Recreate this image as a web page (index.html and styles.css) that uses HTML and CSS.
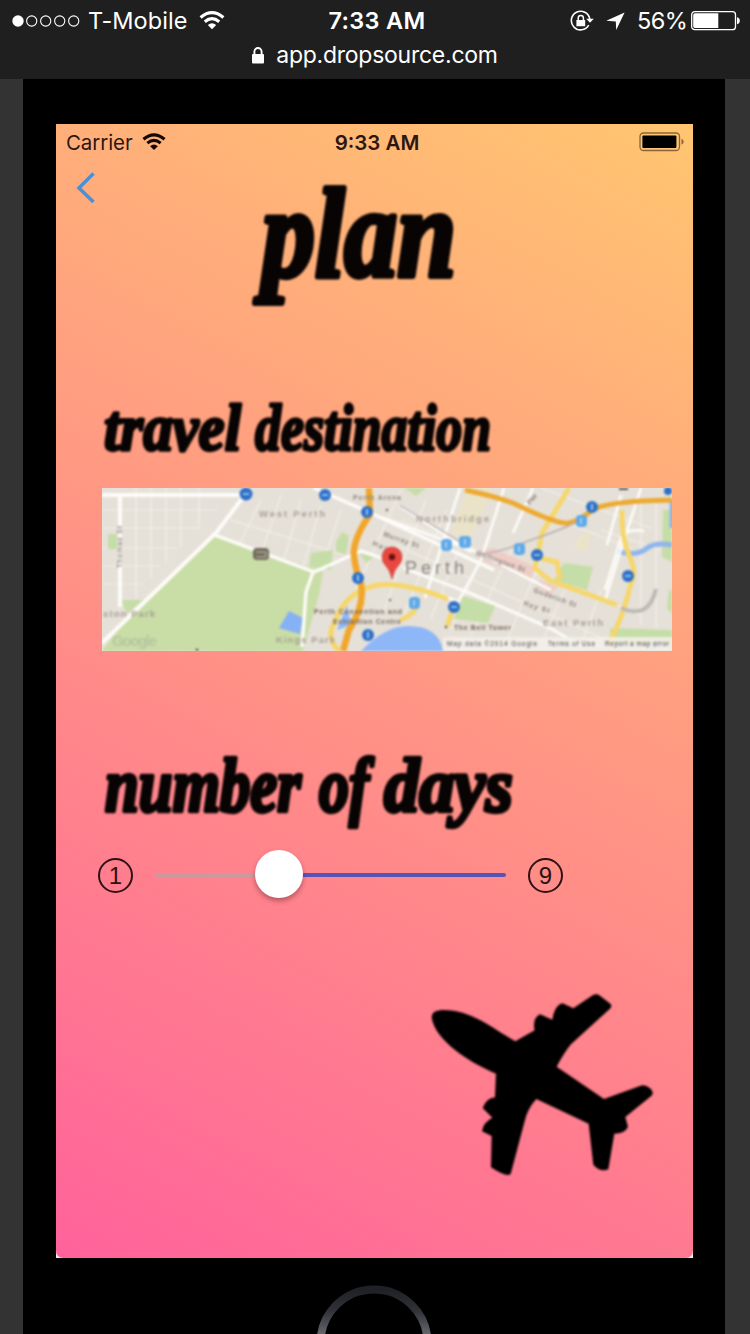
FILE: index.html
```html
<!DOCTYPE html>
<html lang="en">
<head>
<meta charset="utf-8">
<title>Plan</title>
<link rel="stylesheet" href="styles.css">
</head>
<body>
<header class="browser">
  <div class="status">
    <div class="status-left">
      <svg class="signal" width="70" height="14" viewBox="0 0 70 14"><circle cx="7" cy="7" r="5.7" fill="#fff"/><g fill="none" stroke="#fff" stroke-width="1.1"><circle cx="20.7" cy="7" r="5.1"/><circle cx="34.7" cy="7" r="5.1"/><circle cx="48.7" cy="7" r="5.1"/><circle cx="62.7" cy="7" r="5.1"/></g></svg>
      <span class="carrier">T-Mobile</span>
      <svg class="wifi" width="26" height="19" viewBox="0 0 26 19" fill="none" stroke="currentColor" stroke-width="3.1"><path d="M1.6 6.5Q13-3.2 24.4 6.5M5.8 10.7q7.2-6 14.4 0"/><path d="M13 18.3 8.8 14q4.2-3.5 8.4 0z" fill="currentColor" stroke="none"/></svg>
    </div>
    <div class="clock">7:33 AM</div>
    <div class="status-right">
      <svg width="24" height="22" viewBox="0 0 24 22"><path d="M18.7 15.2A9.3 9.3 0 1 1 19.8 9" fill="none" stroke="#fff" stroke-width="1.6"/><path d="M16.2 8.8h7.6L20 12.8zM6.4 10h8.8v6.2H6.4z" fill="#fff"/><path d="M8.2 10.5V8a2.6 2.6 0 0 1 5.2 0v2.5" fill="none" stroke="#fff" stroke-width="1.5"/></svg>
      <svg class="locate" width="19" height="18" viewBox="0 0 19 18"><path d="M18.6.4 10.2 18 9.8 9.6.3 8.8z" fill="#fff"/></svg>
      <span class="percent">56%</span>
      <svg width="50" height="20" viewBox="0 0 50 20"><rect x=".7" y=".7" width="43.8" height="18" rx="3" fill="none" stroke="#fff" stroke-width="1.3"/><path d="M4 2.3h23.3v14.8H4a1.8 1.8 0 0 1-1.8-1.8V4.1A1.8 1.8 0 0 1 4 2.3z" fill="#fff"/><path d="M46 6.3q2.8.8 2.8 3.5T46 13.2z" fill="#fff"/></svg>
    </div>
  </div>
  <div class="address">
    <svg width="12" height="17" viewBox="0 0 12 17"><rect y="7" width="12" height="9.5" rx="1" fill="#fff"/><path d="M2.4 8V4.6a3.6 3.6 0 0 1 7.2 0V8" fill="none" stroke="#fff" stroke-width="1.9"/></svg>
    <span class="url">app.dropsource.com</span>
  </div>
</header>

<main class="device">
  <section class="screen">
    <div class="app">
      <div class="app-status">
        <div class="app-carrier"><span>Carrier</span>
          <svg width="24" height="18" viewBox="0 0 26 19" fill="none" stroke="currentColor" stroke-width="3.4"><path d="M1.6 6.5Q13-3.2 24.4 6.5M5.8 10.7q7.2-6 14.4 0"/><path d="M13 18.3 8.8 14q4.2-3.5 8.4 0z" fill="currentColor" stroke="none"/></svg>
        </div>
        <div class="app-clock">9:33 AM</div>
        <svg class="app-battery" width="46" height="20" viewBox="0 0 46 20"><rect x="1" y="1" width="39.5" height="17.5" rx="3.5" fill="none" stroke="#8b643c" stroke-width="1.3"/><rect x="3.4" y="3.4" width="34" height="12.6" rx="1" fill="#000"/><path d="M42.5 6.7q2.2.8 2.2 3t-2.2 3z" fill="#8b643c"/></svg>
      </div>
      <svg class="back" width="20" height="34" viewBox="0 0 20 34"><path d="M17.5 2.5 3 17l14.5 14" fill="none" stroke="#4b90d4" stroke-width="3.6"/></svg>
      <h1 class="title"><svg class="script" width="225" height="130" viewBox="242 180 225 130"><text x="262" y="276" font-size="126" textLength="194" lengthAdjust="spacingAndGlyphs" stroke-width="6">plan</text></svg></h1>

      <h2 class="label-destination"><svg class="script" width="410" height="70" viewBox="96 394 410 70"><g font-size="66" stroke-width="3.4"><text x="104" y="450" textLength="137" lengthAdjust="spacingAndGlyphs">travel</text> <text x="255" y="450" textLength="236" lengthAdjust="spacingAndGlyphs">destination</text></g></svg></h2>

      <svg class="map" width="570" height="163" viewBox="101 488 570 163">
        <rect x="101" y="488" width="570" height="163" fill="#e6e1d8"/>
        <g class="map-art">
          <g stroke="#f2efe9" stroke-width="1.2" fill="none">
            <path d="M135 488v110M150 488v90M165 488v75M180 488v60M198 488v42M101 510h115M101 528h96M101 548h75M101 566h58M101 584h40M260 500l-22 45M280 495l-22 65M300 500l-20 70M320 505l-18 62M340 510l-20 60M230 520l110 34"/>
            <path d="M400 490l-45 100M425 500l-42 110M445 510l-42 105M470 520l-40 98M490 535l-40 95M510 550l-40 85M540 560l-34 80M570 575l-30 70M600 590l-20 55M400 520l240 95M395 545l210 95M400 565l180 78M480 490l150 58M540 488l110 40M600 530l60 20M640 500v125M655 500v130"/>
          </g>
          <path d="M211 536 322 572 318 595 302 651H101l15-20z" fill="#c9dda6"/>
          <path d="M107 534h9v15h-9zM120 600h22l-16 14zM335 542l6-10 7 4-3 18-10-2zM310 553l22-3-2 20-22-3zM358 553l15 4-8 6zM563 563l29 4-6 23-33-10zM462 596l32 10-7 17-34-4zM662 510h9v52l-10-5zM609 628l62 2v14h-62zM403 488h22l-10 8zM668 590h3v24l-5-6z" fill="#c5dda6"/>
          <path d="M477 550l15-2 42 19-3 12-52-19zM539 580l18 7-8 8-14-9z" fill="#edcdc6"/>
          <path d="M492 488l-22 48-20-3 17-45zM580 535l9-3-3 20-14-5z" fill="#ebe3c7"/>
          <path d="M288 611l14 7-3 16-21-6z" fill="#86b1f5"/>
          <path d="M360 651q24-25 47-25 31 0 35 25zM346 605l-10 25 14-5z" fill="#8eb7f7"/>
          <path d="M616 551q18 6 29-2 8-7 26-4M671 500v28M657 640l-5 9" fill="none" stroke="#8fb5ee" stroke-width="5"/>
          <g fill="none" stroke="#fdfcf9">
            <path d="M101 495H244M119 495v112M101 643 215 533 246 492" stroke-width="4"/>
            <path d="M211 534 313 572 360 551 398 564M312 572l-7 20-4 55M315 488l-2 0 50 22 130 60" stroke-width="3.4"/>
            <path d="M380 517 475 552 550 590M397 505 470 552M402 568l65 24 80 35 35 20M503 488l-23 72-23 42-18-8M459 488l-35 110M640 488l-18 55-18 58M532 488l-20 45M604 590l16-52q6-10 23-7M620 495l-14 50" stroke-width="2.6"/>
          </g>
          <g fill="none" stroke="#f6d66b" stroke-width="5">
            <path d="M338 651q-14-13-4-30 12-31 43-36 26-3 70 14M453 606l-7 20M417 598q0 16-18 22"/>
            <path d="M568 488 541 533 534 568 548 580 616 605M559 580l-3-18-17-4M621 510q-1 25 7 45 8 17 2 28-8 35-23 62"/>
          </g>
          <g fill="none" stroke="#f1a62b" stroke-width="6.5">
            <path d="M368 488l1 26q-18 27-16 42 2 16 7 28 4 22-12 46l-6 21"/>
            <path d="M464 490q29 6 48 13 45 22 56 20 10-2 22-12 13-10 81-11" stroke="#eda931" stroke-width="5"/>
          </g>
          <path d="M480 554q24-3 50-14 30-10 50-20M398 505l70 42" fill="none" stroke="#b7aeb0" stroke-width="1.4"/>
          <path d="M620 608q28 12 35-19" fill="none" stroke="#bdb9b5" stroke-width="4"/>
          <g fill="#2d70c9">
            <circle cx="245" cy="494" r="6.5"/><circle cx="324" cy="495" r="6"/><circle cx="366" cy="512" r="6"/><circle cx="357" cy="578" r="6"/><circle cx="367" cy="635" r="6"/><circle cx="591" cy="507" r="6"/><circle cx="536" cy="555" r="6"/><circle cx="453" cy="607" r="6"/><circle cx="627" cy="576" r="6"/><circle cx="667" cy="491" r="4"/>
          </g>
          <g fill="#5da9e8"><rect x="440" y="539" width="11" height="12" rx="4"/><rect x="458" y="536" width="12" height="12" rx="4"/><rect x="513" y="543" width="11" height="12" rx="4"/><rect x="575" y="515" width="11" height="12" rx="4"/><rect x="408" y="597" width="11" height="12" rx="4"/></g>
          <g stroke="#b9d4f0" stroke-width="1.6"><path d="M242 494h6M321 495h6M366 509v6M357 575v6M367 632v6M591 504v6M533 555h6M450 607h6M624 576h6M445 542v6M464 539v6M518 546v6M580 518v6M413 600v6"/></g>
          <rect x="252" y="548" width="16" height="12" rx="4" fill="#716b5b"/><path d="M255 552h10v5h-10" fill="none" stroke="#ccc5b2"/>
          <g class="map-text">
            <text x="258" y="517" textLength="66">West Perth</text>
            <text x="415" y="522" textLength="73">Northbridge</text>
            <text x="352" y="500" textLength="48" class="tiny">Perth Arena</text>
            <text x="102" y="617" textLength="52">ston Park</text>
            <text x="275" y="643" textLength="59">Kings Park</text>
            <text x="542" y="626" textLength="60">East Perth</text>
            <text x="404" y="574" textLength="59" class="city">Perth</text>
            <text x="313" y="614" textLength="88" class="tiny dark">Perth Convention and</text>
            <text x="332" y="624" textLength="68" class="tiny dark">Exhibition Centre</text>
            <text x="453" y="630" textLength="57" class="tiny dark">The Bell Tower</text>
            <text transform="translate(382 536) rotate(19)" textLength="37" class="tiny">Murray St</text>
            <text transform="translate(371 545) rotate(22)" textLength="30" class="tiny">Hay St</text>
            <text transform="translate(474 555) rotate(19)" textLength="52" class="tiny">Wellington St</text>
            <text transform="translate(532 592) rotate(20)" textLength="45" class="tiny">Goderich St</text>
            <text transform="translate(522 605) rotate(18)" textLength="27" class="tiny">Hay St</text>
            <text transform="translate(121 568) rotate(-90)" textLength="42" class="tiny">Thomas St</text>
            <text transform="translate(529 505) rotate(-50)" textLength="12" class="tiny">Pier</text>
          </g>
          <path d="M442 637h229v14H442z" fill="#f3f0ea" opacity=".86"/>
          <g class="credit"><text x="446" y="645.5" textLength="90">Map data ©2014 Google</text><text x="547" y="645.5" textLength="47">Terms of Use</text><text x="604" y="645.5" textLength="64">Report a map error</text></g>
          <text class="google" x="111" y="646" textLength="45">Google</text>
          <path d="M618 488h9v2h-9z" fill="#555"/><g fill="#6b6259"><circle cx="386" cy="510" r="1.2"/><circle cx="389" cy="600" r="1.2"/><circle cx="445" cy="627" r="1.3"/><circle cx="196" cy="650" r="1.4"/></g>
          <path d="M391 579q-2-9-6-13-4-4-4-9a10 10 0 0 1 20 0q0 5-4 9-4 4-6 13z" fill="#e9473f" stroke="#c83a32" stroke-width=".7"/><circle cx="391" cy="557" r="3.2" fill="#66110e"/>
        </g>
      </svg>

      <h2 class="label-days"><svg class="script" width="430" height="90" viewBox="96 750 430 90"><g font-size="76" stroke-width="4.4"><text x="105" y="811" textLength="196" lengthAdjust="spacingAndGlyphs">number</text> <text x="319" y="811" textLength="50" lengthAdjust="spacingAndGlyphs">of</text> <text x="384" y="811" textLength="129" lengthAdjust="spacingAndGlyphs">days</text></g></svg></h2>

      <div class="slider">
        <span class="bound">1</span>
        <div class="track"><div class="rest"></div><div class="thumb"></div><div class="fill"></div></div>
        <span class="bound">9</span>
      </div>

      <svg class="plane" width="260" height="210" viewBox="0 0 260 210"><path transform="scale(.3333)" d="M66 118Q60 92 95 90C180 88 240 140 316 184L374 151Q366 116 390 103L427 119Q434 75 458 70L490 85 548 46Q560 39 570 47L602 72Q607 79 600 86L483 193Q463 217 440 260L582 357 692 317Q704 312 722 326 735 341 721 350L646 411 654 440Q646 460 613 461L595 568Q570 577 550 554L536 431 379 357Q352 386 344 424L302 582Q290 593 243 562L245 468 216 454Q219 428 247 413L218 384Q229 354 255 352L258 281C170 244 80 182 66 118z"/></svg>
    </div>
  </section>
  <svg class="home" width="116" height="49" viewBox="0 0 116 49"><defs><linearGradient id="ring" x1="0" y1="0" x2="0" y2="1"><stop offset="0" stop-color="#202127"/><stop offset=".2" stop-color="#303238"/><stop offset=".42" stop-color="#66676c"/></linearGradient></defs><circle cx="58" cy="58" r="53.5" fill="none" stroke="url(#ring)" stroke-width="8"/></svg>
</main>
</body>
</html>
```
FILE: styles.css
```css
* { box-sizing: border-box; }
body {
  margin: 0;
  width: 750px;
  height: 1334px;
  overflow: hidden;
  display: flex;
  flex-direction: column;
  background: #333;
  font-family: Inter, "Liberation Sans", sans-serif;
}
svg { display: block; flex: none; }
h1, h2 { margin: 0; }

.browser {
  height: 79px;
  background: #1f1f1f;
  color: #fff;
}
.status {
  display: grid;
  grid-template-columns: 250px 1fr 250px;
  height: 41px;
  align-items: center;
  padding: 0 9px 0 11px;
  font-size: 23.5px;
  white-space: nowrap;
}
.status-left { display: flex; align-items: center; }
.carrier { width: 99px; margin-left: 7px; letter-spacing: .05px; }
.wifi { margin-left: 12px; }
.clock { text-align: center; font-weight: 600; letter-spacing: .3px; padding-left: 2px; }
.status-right { display: flex; align-items: center; justify-content: flex-end; }
.locate { margin-left: 12px; }
.percent { margin: 0 5px 0 12px; width: 49px; letter-spacing: -.5px; }
.address {
  display: flex;
  justify-content: center;
  align-items: center;
  gap: 12px;
  height: 28px;
  font-size: 23px;
  letter-spacing: -.25px;
}

.device {
  flex: 1;
  margin: 0 25px 0 23px;
  padding-top: 45px;
  background: #000;
  display: flex;
  flex-direction: column;
  align-items: center;
}
.screen {
  width: 637px;
  height: 1134px;
  flex: none;
  background: #f4e9ec;
  align-self: flex-start;
  margin-left: 33px;
}
.app {
  height: 1134px;
  border-radius: 0 0 7px 7px;
  background: linear-gradient(28deg, #ff629b, #ff9485 50%, #ffc670);
  display: flex;
  flex-direction: column;
  align-items: flex-start;
}
.app-status {
  display: grid;
  grid-template-columns: 1fr auto 1fr;
  align-items: center;
  width: 100%;
  height: 36px;
  padding: 0 8px 0 10px;
  font-size: 20.5px;
  color: #2c1710;
}
.app-carrier { display: flex; align-items: center; gap: 9px; letter-spacing: -.1px; }
.app-carrier svg { color: #150904; }
.app-clock { font-weight: 600; letter-spacing: 0; padding-left: 3px; }
.app-battery { justify-self: end; }
.back { margin: 11px 0 0 20px; }
.title { margin: -25px 0 0 186px; }
.script { filter: blur(1px); overflow: visible; }
.script text {
  font-family: "Liberation Serif", serif;
  font-weight: 700;
  font-style: italic;
  fill: #080404;
  stroke: #080404;
  stroke-linejoin: round;
}
.label-destination { margin: 84px 0 0 40px; }
.map { margin: 24px 0 0 46px; overflow: hidden; }
.map-art { filter: blur(1.1px); }
.map-text text { font: 700 9.5px "Liberation Sans", sans-serif; fill: #a69f99; }
.map-text .tiny { font-size: 7px; fill: #8d8580; }
.map-text .dark { fill: #75685f; }
.map-text .city { font-size: 18px; font-weight: 400; fill: #8a8582; }
.credit text { font: 6.5px "Liberation Sans", sans-serif; fill: #3d3937; }
.google { font: 700 15px "Liberation Sans", sans-serif; fill: #b7c6a1; }
.label-days { margin: 99px 0 0 40px; }

.slider { display: flex; align-items: center; margin: 8px 0 0 42px; height: 54px; }
.bound {
  width: 35px;
  height: 35px;
  border: 2.6px solid #301012;
  border-radius: 50%;
  font: 24px/32px "Liberation Sans", sans-serif;
  text-align: center;
  color: #301012;
}
.track { width: 351px; margin: 0 22px 0 22px; display: flex; align-items: center; }
.rest { width: 102px; height: 4px; border-radius: 2px; background: #c89a9d; }
.thumb {
  width: 48px;
  height: 48px;
  margin: -3px -1px 0 -2px;
  border-radius: 50%;
  background: #fff;
  box-shadow: 0 3px 5px #5c202c70;
  z-index: 1;
}
.fill { flex: 1; height: 4px; border-radius: 2px; background: #5555b8; }
.plane { margin: 78px 0 0 354px; filter: blur(.8px); }
.home { margin: 27px 0 0 0; }
```
